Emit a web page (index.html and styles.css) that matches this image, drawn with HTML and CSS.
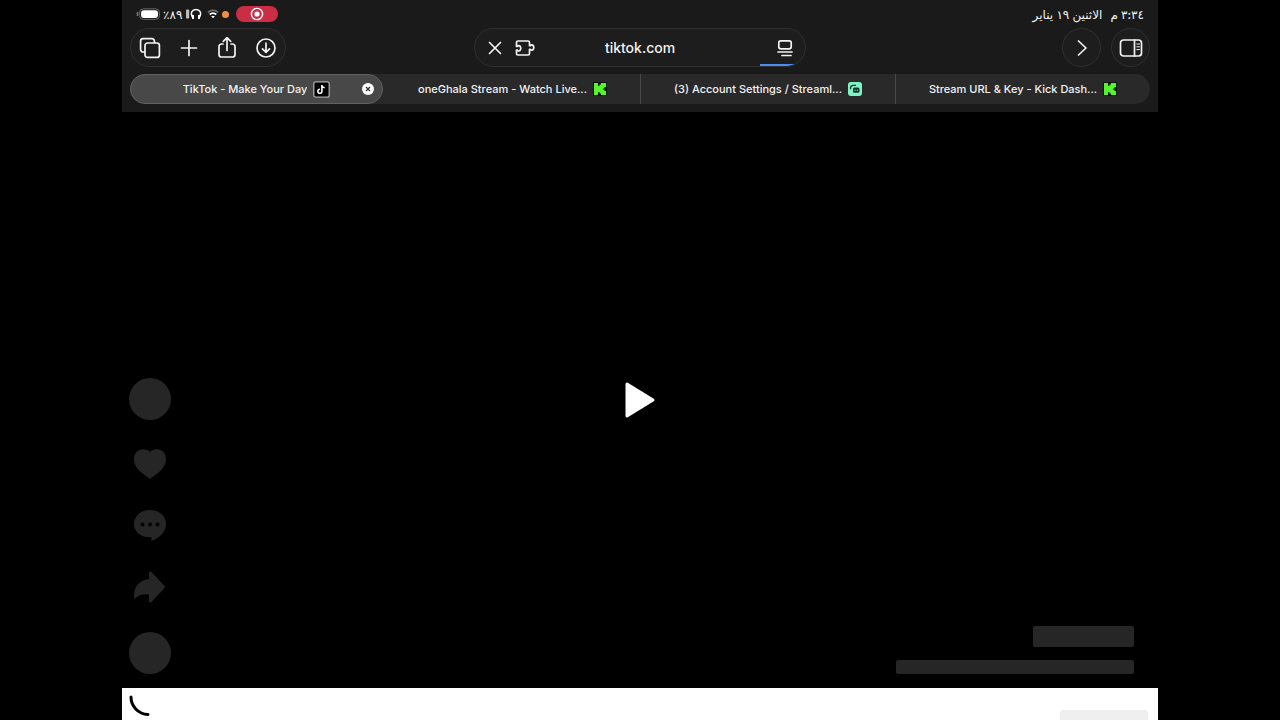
FILE: index.html
```html
<!DOCTYPE html>
<html lang="en">
<head>
<meta charset="utf-8">
<meta name="viewport" content="width=device-width, initial-scale=1">
<title>TikTok - Make Your Day</title>
<link rel="stylesheet" href="styles.css">
</head>
<body>
<div class="screen">
  <header class="chrome">
    <div class="status" lang="ar" dir="rtl">
      <div class="clock"><time>٣:٣٤ م</time><span>الاثنين ١٩ يناير</span></div>
      <div class="indicators" dir="ltr">
        <svg width="24" height="12" viewBox="0 0 24 12" aria-label="Battery"><path d="M1.5 4v4" stroke="#777" stroke-width="1.6"/><rect x="3.5" y=".8" width="20" height="10.6" rx="4" fill="none" stroke="#666"/><rect x="5" y="2.2" width="17" height="7.8" rx="3" fill="#fff"/></svg>
        <span class="percent" dir="rtl">٨٩٪</span>
        <svg class="headphones" width="16" height="12" viewBox="0 0 16 12" aria-label="Headphones"><rect x="0" y="1.500" width="3.200" height="9" rx=".8" fill="#bbb"/><path d="M7 10.2C3.500 4.500 6.500 1.500 10 1.500s6.500 3 3 8.700" fill="none" stroke="#fff" stroke-width="1.500"/><path d="M7 7v4M13 7v4" stroke="#fff" stroke-width="2"/></svg>
        <svg class="wifi" width="12" height="10" viewBox="0 0 12 10" aria-label="Wi-Fi"><path d="M.8 3.400Q6-1 11.200 3.400" fill="none" stroke="#777" stroke-width="1.500"/><path d="M2.700 5.500Q6 2.700 9.300 5.500" fill="none" stroke="#fff" stroke-width="1.700"/><path d="M6 9.300 4.200 7.300q1.800-1.200 3.600 0z" fill="#fff"/></svg>
        <span class="mic-dot"></span>
        <span class="recording"><svg width="14" height="14" viewBox="0 0 14 14" aria-label="Recording"><circle cx="7" cy="7" r="5.600" fill="none" stroke="#fff" stroke-width="1.400"/><circle cx="7" cy="7" r="2.600" fill="#fff"/></svg></span>
      </div>
    </div>

    <div class="toolbar">
      <div class="tools pill">
        <button aria-label="Tab overview"><svg width="22" height="22" viewBox="0 0 22 22"><path d="M5.500 15H4a2.400 2.400 0 0 1-2.400-2.400V4A2.400 2.400 0 0 1 4 1.600h9A2.400 2.400 0 0 1 15.400 4v1.500"/><rect x="6" y="6" width="14.400" height="14.400" rx="2.500"/></svg></button>
        <button aria-label="New tab"><svg width="22" height="22" viewBox="0 0 22 22"><path d="M11 3.500v15M3.500 11h15"/></svg></button>
        <button aria-label="Share"><svg width="22" height="22" viewBox="0 0 22 22"><path d="M7 7H5.500A2.500 2.500 0 0 0 3 9.500v8A2.500 2.500 0 0 0 5.500 20h11a2.500 2.500 0 0 0 2.500-2.500v-8A2.500 2.500 0 0 0 16.500 7H15M11 13.500V0.800M7.300 4.300 11 .7l3.700 3.600"/></svg></button>
        <button aria-label="Downloads"><svg width="22" height="22" viewBox="0 0 22 22"><circle cx="11" cy="11" r="9"/><path d="M11 6.200v9M7.500 11.800l3.500 3.500 3.500-3.500"/></svg></button>
      </div>
      <div class="address pill">
        <button aria-label="Stop loading"><svg width="14" height="14" viewBox="0 0 14 14"><path d="m1.500 1.500 11 11m0-11-11 11"/></svg></button>
        <button aria-label="Extensions"><svg width="20" height="18" viewBox="0 0 20 18"><path d="M3 2h10a1.500 1.500 0 0 1 1.500 1.500v3.200h.8c.5-.7 1-.9 1.500-.9 2.600 0 2.600 5.400 0 5.400-.5 0-1-.2-1.500-.9h-.8v4.200A1.500 1.500 0 0 1 13 16H3a1.500 1.500 0 0 1-1.500-1.500v-3.400h.8c.5.7 1 .9 1.500.9 2.600 0 2.600-5.400 0-5.400-.5 0-1 .2-1.500.9h-.8v-4A1.500 1.500 0 0 1 3 2z"/></svg></button>
        <input type="text" value="tiktok.com" aria-label="Address">
        <button class="page-menu" aria-label="Page menu"><svg width="16" height="18" viewBox="0 0 16 18"><rect x="1.800" y="1.800" width="12.400" height="8" rx="2"/><path d="M1 13h14M5 16.500h9"/></svg></button>
        <span class="progress"></span>
      </div>
      <div class="side-tools">
        <button class="pill" aria-label="Forward"><svg width="22" height="22" viewBox="0 0 22 22"><path d="m7.500 4 7.500 7-7.500 7"/></svg></button>
        <button class="pill" aria-label="Sidebar"><svg width="24" height="18" viewBox="0 0 24 18"><rect x="1.500" y="1" width="21" height="16" rx="3"/><path d="M15.500 1v16"/><path class="thin" d="M17.800 5h2.700M17.800 7.800h2.700M17.800 10.600h2.700"/></svg></button>
      </div>
    </div>

    <nav class="tabs" aria-label="Open tabs">
      <div class="tab active"><a href="#">TikTok - Make Your Day</a>
        <svg width="17" height="17" viewBox="0 0 17 17"><rect x=".8" y=".8" width="15.400" height="15.400" rx="2" fill="#000" stroke="#aaa" stroke-width="1.300"/><path d="M8.900 4v6.200a2 2 0 1 1-2-2M8.900 4c.2 1.700 1.200 2.600 2.800 2.700" fill="none" stroke="#fff" stroke-width="1.600"/></svg>
        <button class="close" aria-label="Close tab"><svg width="12" height="12" viewBox="0 0 12 12"><circle cx="6" cy="6" r="6" fill="#fff" stroke="none"/><path d="m4 4 4 4m0-4-4 4" stroke="#333" stroke-width="1.300"/></svg></button>
      </div>
      <div class="tab"><a href="#">oneGhala Stream - Watch Live...</a>
        <svg width="14" height="14" viewBox="0 0 14 14"><rect width="14" height="14" rx="1" fill="#07180a"/><path d="M1 1h4v3h1.500V2.500H8V1h5v4h-1.500v1.500H10v1h1.500V9H13v4H8v-1.500H6.500V10H5v3H1z" fill="#55f52b"/></svg>
      </div>
      <div class="tab"><a href="#">(3) Account Settings / Streaml...</a>
        <svg width="14" height="14" viewBox="0 0 14 14"><rect width="14" height="14" rx="3" fill="#7ff3c5"/><rect x="5" y="5.500" width="6.500" height="5.300" rx="1.500" fill="#17352d"/><path d="M2.500 7.200V6A2.800 2.800 0 0 1 5.300 3.300H8" fill="none" stroke="#17352d" stroke-width="1.300"/><path d="M7 7.600v1.200M9.400 7.600v1.200" stroke="#7ff3c5"/></svg>
      </div>
      <div class="tab"><a href="#">Stream URL &amp; Key - Kick Dash...</a>
        <svg width="14" height="14" viewBox="0 0 14 14"><rect width="14" height="14" rx="1" fill="#07180a"/><path d="M1 1h4v3h1.500V2.500H8V1h5v4h-1.500v1.500H10v1h1.500V9H13v4H8v-1.500H6.500V10H5v3H1z" fill="#55f52b"/></svg>
      </div>
    </nav>
  </header>

  <main class="player">
    <div class="actions">
      <span class="avatar"></span>
      <button aria-label="Like"><svg width="32" height="32" viewBox="0 0 32 32"><path d="M16 3C12-1.500 0-1 0 10.500 0 20 10 25 16 30c6-5 16-10 16-19.500C32-1 20-1.500 16 3z"/></svg></button>
      <button aria-label="Comments"><svg width="32" height="32" viewBox="0 0 32 32"><path d="M16 0c9 0 16 6 16 14 0 7-5 13-14.500 17v-3.800C7 28 0 22 0 14 0 6 7 0 16 0z"/><g fill="#000"><circle cx="8.500" cy="14.500" r="2"/><circle cx="16" cy="14.500" r="2"/><circle cx="23.500" cy="14.500" r="2"/></g></svg></button>
      <button aria-label="Share video"><svg width="32" height="32" viewBox="0 0 32 32"><path d="M15 2c0-1.600 1.500-2 2.500-1l13 14q1 1 0 2l-13 14c-1 1-2.500.6-2.500-1v-6.500C9 22.500 5 24 1.500 27 0 28 0 27 0 25 0 15 6 9 15 8z"/></svg></button>
      <span class="avatar"></span>
    </div>
    <button class="play" aria-label="Play"><svg width="30" height="36" viewBox="0 0 30 36"><path d="M2 2v32l26-16z" fill="#fff" stroke="#fff" stroke-width="3" stroke-linejoin="round"/></svg></button>
    <div class="caption"><span class="line name"></span><span class="line"></span></div>
  </main>

  <footer class="sheet">
    <svg width="22" height="22" viewBox="0 0 22 22" aria-label="Loading"><path d="M2 2c0 9 7 17 17 17.500" fill="none" stroke="#000" stroke-width="3" stroke-linecap="round"/></svg>
    <span class="placeholder"></span>
  </footer>
</div>
</body>
</html>
```

FILE: styles.css
```css
* { box-sizing: border-box; }
body {
  margin: 0;
  background: #000;
  color: #f2f2f2;
  font-family: Inter, "Noto Sans", "DejaVu Sans", sans-serif;
}
button {
  display: grid;
  place-items: center;
  padding: 0;
  border: 0;
  background: none;
  color: inherit;
}
svg { display: block; flex: none; }
.screen {
  display: flex;
  flex-direction: column;
  min-height: 100vh;
  margin: 0 122px;
}

.chrome { padding: 0 8px; background: #1a1a1a; }
.status {
  display: flex;
  justify-content: space-between;
  align-items: center;
  height: 28px;
  padding: 0 6px;
}
.clock { display: flex; gap: 8px; font-size: 12px; font-weight: 500; }
.indicators { display: flex; align-items: center; }
.percent { margin-left: 3px; font-size: 12px; font-weight: 500; }
.headphones { margin-left: 4px; }
.wifi { margin-left: 5px; }
.mic-dot { width: 7px; height: 7px; margin-left: 3px; border-radius: 50%; background: #f09040; }
.recording {
  display: grid;
  place-items: center;
  width: 42px;
  height: 16px;
  margin-left: 7px;
  border-radius: 8px;
  background: #cb2d45;
}

.toolbar {
  display: grid;
  grid-template-columns: 1fr 332px 1fr;
  align-items: center;
}
.toolbar svg { fill: none; stroke: #f2f2f2; stroke-width: 1.7; stroke-linecap: round; stroke-linejoin: round; }
.toolbar .thin { stroke-width: 1; }
.pill {
  height: 39px;
  border: 1px solid #303030;
  border-radius: 20px;
  background: #1d1d1d;
}
.tools {
  display: flex;
  justify-content: space-between;
  width: 156px;
  padding: 0 8px;
}
.address {
  position: relative;
  display: flex;
  align-items: center;
  overflow: hidden;
  padding: 0 12px;
}
.address button { width: 16px; }
.address button + button { width: 20px; margin-left: 12px; }
.address input {
  flex: 1;
  min-width: 0;
  padding: 0 32px 0 0;
  border: 0;
  outline: 0;
  background: none;
  color: inherit;
  font: 500 14px Inter, sans-serif;
  text-align: center;
}
.progress {
  position: absolute;
  right: 0;
  bottom: 0;
  width: 45px;
  height: 2px;
  background: #4f8cf0;
}
.side-tools { display: flex; justify-content: flex-end; gap: 10px; }
.side-tools button { width: 39px; }

.tabs {
  display: grid;
  grid-template-columns: repeat(4, 1fr);
  margin: 7px 0 8px;
  border-radius: 15px;
  background: #292929;
}
.tab {
  position: relative;
  display: flex;
  align-items: center;
  justify-content: center;
  gap: 6px;
  height: 30px;
}
.tab + .tab + .tab { border-left: 1px solid #484848; }
.tab a {
  overflow: hidden;
  color: inherit;
  font-size: 11px;
  font-weight: 500;
  text-decoration: none;
  white-space: nowrap;
}
.tab.active {
  margin-right: 2px;
  border: 1px solid #616161;
  border-radius: 15px;
  background: #484848;
}
.close { position: absolute; right: 8px; }

.player {
  position: relative;
  display: flex;
  flex: 1;
  align-items: flex-end;
  justify-content: space-between;
  padding: 14px 24px 14px 7px;
}
.actions { display: flex; flex-direction: column; align-items: center; gap: 29px; fill: #262626; }
.avatar { width: 42px; height: 42px; border-radius: 50%; background: #262626; }
.play { position: absolute; inset: 0; margin: auto; width: 30px; height: 36px; }
.caption { display: flex; flex-direction: column; align-items: flex-end; gap: 13px; }
.line { width: 238px; height: 14px; border-radius: 2px; background: #262626; }
.line.name { width: 101px; height: 21px; }

.sheet {
  display: flex;
  justify-content: space-between;
  align-items: flex-end;
  height: 32px;
  padding: 0 10px 0 7px;
  background: #fff;
}
.sheet svg { margin-bottom: 3px; }
.placeholder { width: 88px; height: 10px; border-radius: 4px 4px 0 0; background: #efefef; }
```
